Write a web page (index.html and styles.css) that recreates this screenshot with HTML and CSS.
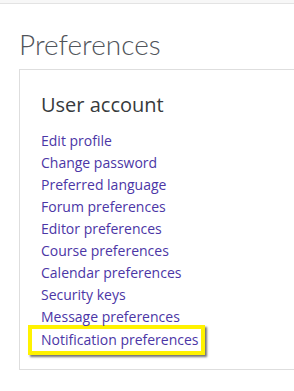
FILE: index.html
```html
<!DOCTYPE html>
<html lang="en">
<head>
    <meta charset="UTF-8">
    <meta name="viewport" content="width=device-width, initial-scale=1.0">
    <title>Preferences</title>
    <link rel="stylesheet" href="styles.css">
</head>
<body>
    <div class="topbar"></div>

    <h1 class="page-title">Preferences</h1>

    <div class="card">
        <h2 class="card-title">User account</h2>
        <ul class="pref-list">
            <li><a href="#">Edit profile</a></li>
            <li><a href="#">Change password</a></li>
            <li><a href="#">Preferred language</a></li>
            <li><a href="#">Forum preferences</a></li>
            <li><a href="#">Editor preferences</a></li>
            <li><a href="#">Course preferences</a></li>
            <li><a href="#">Calendar preferences</a></li>
            <li><a href="#">Security keys</a></li>
            <li><a href="#">Message preferences</a></li>
            <li class="highlight"><a href="#">Notification preferences</a></li>
        </ul>
    </div>
</body>
</html>
```

FILE: styles.css
```css
body { margin: 0; font-family: "Open Sans", "Noto Sans", sans-serif; background: #fff; color: #333; overflow: hidden; }
.topbar { height: 3px; border-bottom: 1px solid #e3e3e3; background: #f7f7f7; }
.page-title { margin: 0; padding: 22px 0 0 19px; height: 43px; font-family: "Lato", "Open Sans", sans-serif; font-size: 28px; font-weight: 300; color: #50545a; line-height: 36px; }
.card { margin-left: 19px; width: 276px; height: 301px; border: 1px solid #dedede; box-sizing: border-box; padding: 20px 0 0 21px; }
.card-title { margin: 0 0 10px; font-size: 20px; font-weight: 400; color: #373a3c; line-height: 30px; }
.pref-list { list-style: none; margin: 0; padding: 0; }
.pref-list li { line-height: 22px; font-size: 14px; }
.pref-list a { color: #4b36a6; text-decoration: none; }
.pref-list .highlight { box-sizing: border-box; margin: -3px 0 0 -13px; width: 177px; height: 30px; padding-left: 9px; border: 4px solid #fff200; box-shadow: 2px 2px 2px rgba(0,0,0,0.55); }
```
